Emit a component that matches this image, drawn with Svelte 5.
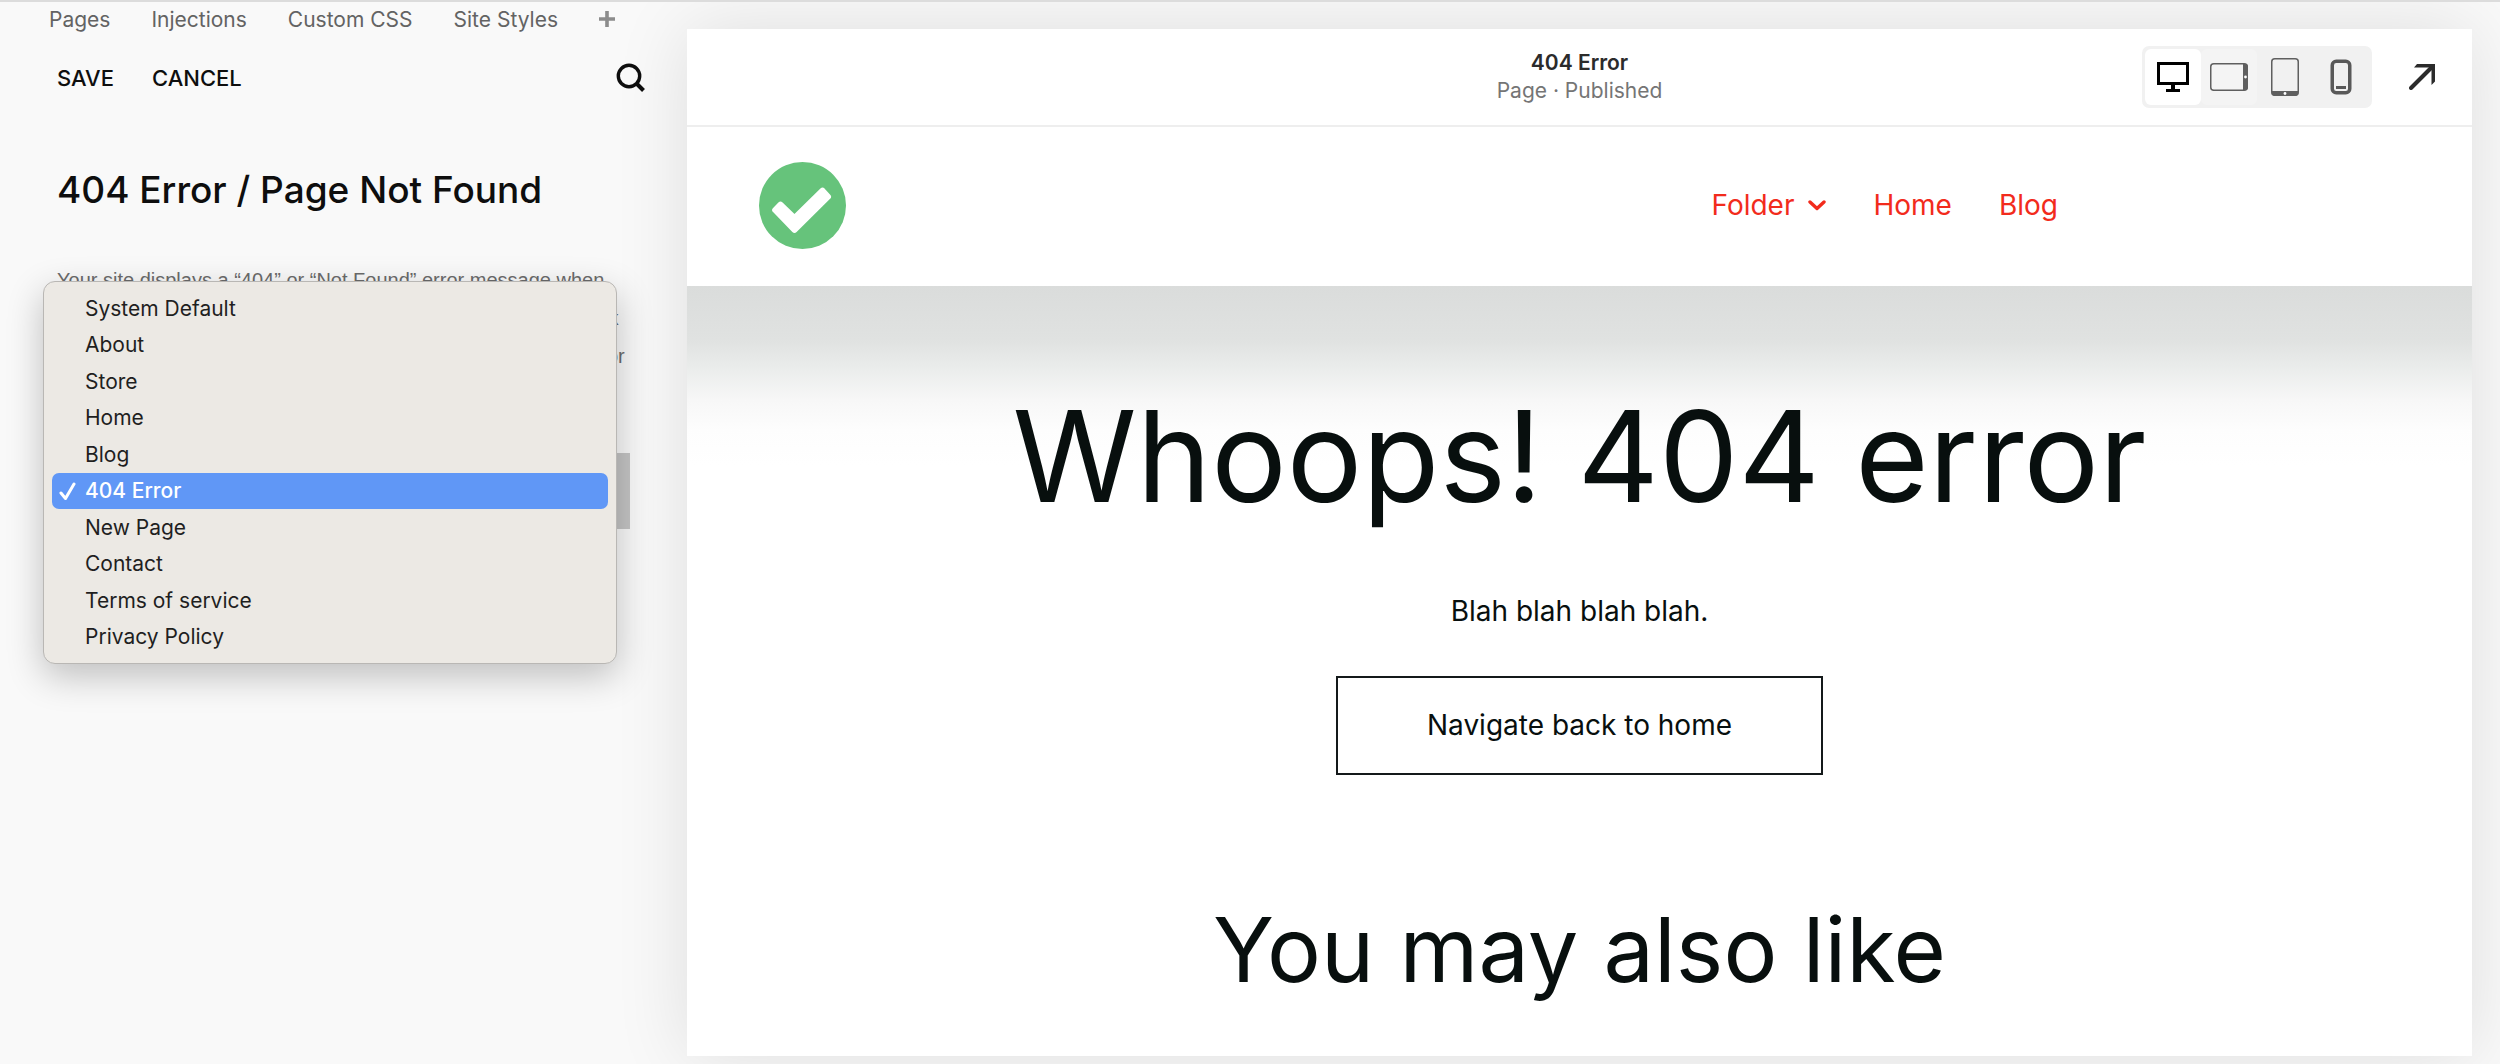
<script lang="ts">
	const tabs = ['Pages', 'Injections', 'Custom CSS', 'Site Styles'];

	const pages = [
		'System Default',
		'About',
		'Store',
		'Home',
		'Blog',
		'404 Error',
		'New Page',
		'Contact',
		'Terms of service',
		'Privacy Policy'
	];

	let selected = $state('404 Error');
	let device = $state('desktop');
</script>

<div class="editor">
	<aside class="sidebar">
		<nav class="tabs">
			{#each tabs as tab}
				<a href="#{tab}">{tab}</a>
			{/each}
			<button class="add-tab" aria-label="Add shortcut">
				<svg width="16" height="16" viewBox="0 0 16 16">
					<path d="M8 0v16M0 8h16" stroke="#8c8c8c" stroke-width="3.6" />
				</svg>
			</button>
		</nav>

		<div class="actions">
			<button>SAVE</button>
			<button>CANCEL</button>
			<button class="search" aria-label="Search">
				<svg width="30" height="30" viewBox="0 0 30 30" fill="none" stroke="#0e0e0e">
					<circle cx="13" cy="13" r="10.7" stroke-width="3.4" />
					<path d="M20.5 20.5l7 7" stroke-width="4" />
				</svg>
			</button>
		</div>

		<h1>404 Error / Page Not Found</h1>

		<p class="help">
			Your site displays a “404” or “Not Found” error message when<br />
			a visitor opens a page that does not exist, or follows a dead link<br />
			on this site. Choose any page below to serve as your site’s error
		</p>

		<!-- Page picker, with its list open over the field -->
		<div class="picker">
			<select bind:value={selected} aria-label="404 page">
				{#each pages as page}
					<option>{page}</option>
				{/each}
			</select>
			<div class="menu" role="listbox" aria-label="404 page">
				{#each pages as page}
					<button
						role="option"
						aria-selected={page === selected}
						class:selected={page === selected}
						onclick={() => (selected = page)}
					>
						<svg width="18" height="18" viewBox="0 0 18 18" fill="none">
							{#if page === selected}
								<path d="M2 11l4.500 5.500L15 2" stroke="#fff" stroke-width="3" stroke-linecap="round" stroke-linejoin="round" />
							{/if}
						</svg>
						{page}
					</button>
				{/each}
			</div>
		</div>
	</aside>

	<main class="preview">
		<div class="toolbar">
			<div class="page-info">
				<strong>404 Error</strong>
				<span>Page · Published</span>
			</div>
			<div class="tools">
				<div class="devices">
					<button class:active={device === 'desktop'} onclick={() => (device = 'desktop')} aria-label="Desktop">
						<svg width="32" height="30" viewBox="0 0 32 30">
							<path d="M0 0h32v23H18v4h5v3H9v-3h5v-4H0zM3 3v17h26V3z" fill="#000" fill-rule="evenodd" />
						</svg>
					</button>
					<button class="hovered" onclick={() => (device = 'landscape')} aria-label="Tablet landscape">
						<svg width="38" height="28" viewBox="0 0 38 28">
							<rect x="0.75" y="0.75" width="36.5" height="26.5" rx="3" fill="none" stroke="#5f5f5f" stroke-width="1.5" />
							<path d="M33 1h2a3 3 0 0 1 3 3v20a3 3 0 0 1-3 3h-2z" fill="#5f5f5f" />
							<circle cx="35.5" cy="14" r="1.4" fill="#fff" />
						</svg>
					</button>
					<button onclick={() => (device = 'portrait')} aria-label="Tablet portrait">
						<svg width="28" height="38" viewBox="0 0 28 38">
							<rect x="0.75" y="0.75" width="26.5" height="36.5" rx="3" fill="none" stroke="#5f5f5f" stroke-width="1.5" />
							<path d="M1 33h26v2a3 3 0 0 1-3 3H4a3 3 0 0 1-3-3z" fill="#5f5f5f" />
							<circle cx="14" cy="35.5" r="1.4" fill="#fff" />
						</svg>
					</button>
					<button onclick={() => (device = 'mobile')} aria-label="Mobile">
						<svg width="22" height="36" viewBox="0 0 22 36">
							<rect x="2.25" y="2.25" width="17.5" height="31.5" rx="4" fill="none" stroke="#595959" stroke-width="3.5" />
							<path d="M6 28.500h10" stroke="#595959" stroke-width="3" />
						</svg>
					</button>
				</div>
				<a class="open" href="#open" aria-label="Open site">
					<svg width="26" height="26" viewBox="0 0 26 26">
						<path d="M2 24L22.500 3.500" stroke="#2b2b2b" stroke-width="4" stroke-linecap="round" />
						<path d="M8 0h18v17.500l-3.500 3.500V3.500H5z" fill="#2b2b2b" />
					</svg>
				</a>
			</div>
		</div>

		<header class="site-header">
			<a class="logo" href="#home" aria-label="Home">
				<svg width="87" height="87" viewBox="0 0 87 87">
					<circle cx="43.5" cy="43.5" r="43.5" fill="#66c37b" />
					<path
						d="M16.200 48l5.300-5.300 14 13.500 28-27.500 5.500 6-33.500 33.100z"
						fill="#fff"
						stroke="#fff"
						stroke-width="6"
						stroke-linejoin="round"
					/>
				</svg>
			</a>
			<nav class="site-nav">
				<a href="#folder">
					Folder
					<svg width="18" height="11" viewBox="0 0 18 11" fill="none" stroke="#f22b1c">
						<path d="M2 2l7 6.500L16 2" stroke-width="3.4" stroke-linecap="round" stroke-linejoin="round" />
					</svg>
				</a>
				<a href="#home">Home</a>
				<a href="#blog">Blog</a>
			</nav>
		</header>

		<section class="content">
			<h2>Whoops! 404 error</h2>
			<p>Blah blah blah blah.</p>
			<a class="back" href="#home">Navigate back to home</a>
			<h3>You may also like</h3>
		</section>
	</main>
</div>

<style>
	:global(body) {
		margin: 0;
		background: #f9f9f9;
	}

	.editor {
		display: grid;
		grid-template-columns: 687px 1fr;
		min-height: 100vh;
		box-sizing: border-box;
		border-top: 2px solid #dcdcdc;
		font-family: Inter, 'Liberation Sans', sans-serif;
		font-size: 21px;
		color: #0e0e0e;
		overflow: hidden;
	}

	button {
		border: 0;
		padding: 0;
		background: none;
		font: inherit;
		color: inherit;
		cursor: pointer;
	}

	a {
		color: inherit;
		text-decoration: none;
	}

	svg {
		display: block;
		flex: none;
	}

	.sidebar {
		padding: 4px 41px 0 57px;
	}

	.tabs {
		display: flex;
		align-items: center;
		gap: 41px;
		margin-left: -8px;
		height: 26px;
		color: #636363;
	}

	.actions {
		display: flex;
		align-items: center;
		gap: 38px;
		margin-top: 30px;
		height: 32px;
		font-size: 22px;
		font-weight: 500;
	}

	.search {
		margin-left: auto;
	}

	h1 {
		margin: 73px 0 0;
		font-size: 37px;
		font-weight: 500;
		line-height: 46px;
		white-space: nowrap;
	}

	.help {
		margin: 48px 0 0;
		font-family: 'Liberation Sans', sans-serif;
		font-size: 20px;
		line-height: 38px;
		color: #6b6b6b;
		white-space: nowrap;
	}

	.picker {
		position: relative;
		margin-top: 78px;
	}

	select {
		display: block;
		appearance: none;
		width: 573px;
		height: 76px;
		border: 0;
		padding: 0 24px;
		background: #c4c4c4;
		font: inherit;
	}

	.menu {
		position: absolute;
		left: -14px;
		bottom: -135px;
		display: flex;
		flex-direction: column;
		box-sizing: border-box;
		width: 574px;
		height: 383px;
		padding: 8px;
		border: 1px solid #b9b7b4;
		border-radius: 12px;
		background: #ece9e4;
		box-shadow: 0 12px 36px rgba(0, 0, 0, 0.24);
		color: #1f1f1f;
	}

	.menu button {
		display: flex;
		flex: 1;
		align-items: center;
		gap: 8px;
		padding-left: 7px;
		border-radius: 7px;
		text-align: left;
	}

	.menu .selected {
		background: #6097f6;
		color: #fff;
		font-weight: 500;
	}

	.preview {
		margin: 27px 28px 9px 0;
		background: #fff;
		box-shadow: 0 0 70px rgba(0, 0, 0, 0.11);
	}

	.toolbar {
		display: grid;
		grid-template-columns: 1fr auto 1fr;
		align-items: center;
		height: 96px;
		padding-right: 37px;
		padding-left: 37px;
		border-bottom: 2px solid #eee;
	}

	.page-info {
		display: flex;
		grid-column: 2;
		flex-direction: column;
		align-items: center;
		line-height: 28px;
	}

	.page-info strong {
		font-weight: 600;
		color: #2b2b2b;
	}

	.page-info span {
		color: #757575;
	}

	.tools {
		display: flex;
		align-items: center;
		justify-content: flex-end;
		gap: 37px;
	}

	.devices {
		display: flex;
		padding: 3px;
		border-radius: 7px;
		background: #f1f1f1;
	}

	.devices button {
		display: grid;
		place-items: center;
		width: 56px;
		height: 56px;
		border-radius: 6px;
	}

	.devices .active {
		background: #fff;
	}

	.devices .hovered {
		background: #f4f4f4;
	}

	.site-header {
		display: flex;
		align-items: center;
		justify-content: space-between;
		box-sizing: border-box;
		height: 159px;
		padding: 0 414px 3px 72px;
	}

	.site-nav {
		display: flex;
		gap: 47px;
		font-size: 28px;
		line-height: 32px;
		color: #f22b1c;
	}

	.site-nav a {
		display: flex;
		align-items: center;
		gap: 14px;
	}

	.content {
		display: flex;
		flex-direction: column;
		align-items: center;
		padding: 102px 0 52px;
		background: linear-gradient(#dadcdb, #e0e2e1 54px, #ebedec 84px, #f7f7f7 114px, #fdfdfd 144px, #fff 180px);
		color: #080f0e;
	}

	h2 {
		margin: 0;
		font-size: 126px;
		font-weight: 400;
		line-height: 136px;
	}

	.content p {
		margin: 69px 0 0;
		font-size: 28px;
		line-height: 36px;
	}

	.back {
		margin-top: 47px;
		padding: 29px 89px 30px;
		border: 2px solid #14191a;
		font-size: 28px;
		line-height: 36px;
	}

	h3 {
		margin: 121px 0 0;
		font-size: 90px;
		font-weight: 400;
		line-height: 108px;
	}
</style>
